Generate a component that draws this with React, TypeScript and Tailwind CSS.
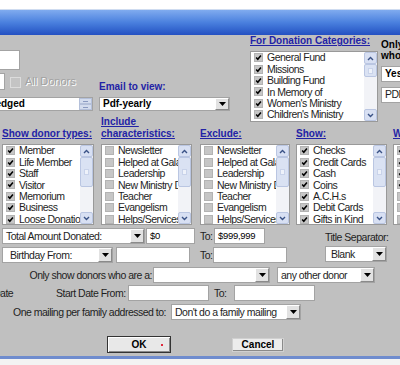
import React from 'react';

// donor report dialog, cropped

const txt = "text-[10.5px] tracking-[-0.5px] text-[#1e1e1e]";
const head = "text-[10px] font-bold leading-[12px] text-[#2323a6] underline whitespace-nowrap";

function Tick() {
  return (
    <svg width="7" height="7" viewBox="0 0 9 9">
      <path d="M1.5 4.6 3.6 6.9 7.6 2" fill="none" stroke="#000" strokeWidth="2" />
    </svg>
  );
}

function Box({ on }: { on: boolean }) {
  return (
    <span className="flex h-[9px] w-[9px] shrink-0 items-center justify-center border border-[#b3b3b3] bg-[#c6c6c6]">
      {on && <Tick />}
    </span>
  );
}

function Arrow({ up }: { up?: boolean }) {
  return (
    <div className="flex h-[12px] shrink-0 items-center justify-center rounded-[2px] border border-[#bac6e2] bg-[#d8e0f3]">
      <svg width="7" height="5" viewBox="0 0 7 5">
        <path d={up ? 'M1 4 3.5 1.5 6 4' : 'M1 1 3.5 3.5 6 1'} fill="none" stroke="#3a5286" strokeWidth="1.4" />
      </svg>
    </div>
  );
}

function ScrollBar({ thumb }: { thumb: string }) {
  return (
    <div className="flex w-[13px] shrink-0 flex-col bg-[#f2f3f7]">
      <Arrow up />
      <div className="flex-1">
        <div className={`flex items-center justify-center rounded-[2px] border border-[#bac6e2] bg-[#dae2f3] ${thumb}`}>
          <span className="h-[6px] w-[5px] border border-[#c9d3ea] bg-[#eef2fa]" />
        </div>
      </div>
      <Arrow />
    </div>
  );
}

function ListBox({ items, on, className, thumb }: { items: string[]; on: number; className: string; thumb: string }) {
  return (
    <div className={`flex border border-[#999] bg-white ${className}`}>
      <div className="flex min-w-0 flex-1 flex-col overflow-hidden">
        {items.map((t, i) => (
          <div key={t} className="flex h-[11.4px] shrink-0 items-center pl-[3px]">
            <Box on={i < on} />
            <span className={`ml-[4px] whitespace-nowrap leading-none ${txt}`}>{t}</span>
          </div>
        ))}
      </div>
      <ScrollBar thumb={thumb} />
    </div>
  );
}

function DropBtn() {
  return (
    <div className="flex w-[14px] shrink-0 items-center justify-center border border-b-[#8a8a8a] border-l-white border-r-[#8a8a8a] border-t-white bg-[#e2e2e2]">
      <svg width="7" height="4" viewBox="0 0 7 4">
        <path d="M0 0h7L3.5 4z" fill="#000" />
      </svg>
    </div>
  );
}

function Select({ text, className, bold, pad = 'pl-[3px]' }: { text: string; className: string; bold?: boolean; pad?: string }) {
  return (
    <div className={`flex border border-[#a3a3a3] bg-white ${className}`}>
      <span
        className={`min-w-0 flex-1 self-center overflow-hidden whitespace-nowrap leading-[12px] ${pad} ${
          bold ? 'text-[10px] font-bold text-black' : txt
        }`}
      >
        {text}
      </span>
      <DropBtn />
    </div>
  );
}

function Field({ text = '', className }: { text?: string; className: string }) {
  return (
    <div className={`flex items-center overflow-hidden whitespace-nowrap border border-[#a3a3a3] bg-white pl-[3px] ${className}`}>
      {text}
    </div>
  );
}

const donorTypes = ['Member', 'Life Member', 'Staff', 'Visitor', 'Memorium', 'Business', 'Loose Donations'];
const traits = ['Newsletter', 'Helped at Gala', 'Leadership', 'New Ministry Dept', 'Teacher', 'Evangelism', 'Helps/Services'];
const payTypes = ['Checks', 'Credit Cards', 'Cash', 'Coins', 'A.C.H.s', 'Debit Cards', 'Gifts in Kind'];
const categories = ['General Fund', 'Missions', 'Building Fund', 'In Memory of', "Women's Ministry", "Children's Ministry"];
const withList = ['Pledges', 'Gifts', 'Notes', 'Memos', 'Other', 'Misc', 'Extra'];

export default function App() {
  return (
    <div className="h-[365px] w-[400px] overflow-hidden bg-white font-['Liberation_Sans',Arial,sans-serif]">
      <div className="h-[10px] border-b border-[#cfdcf0] bg-white" />
      <div className="h-[25px] bg-gradient-to-b from-[#80abef] via-[#4a80de] to-[#2450c2]" />

      <div className="h-[321px] bg-[#c0c0c0]">
        {/* top block */}
        <div className="flex h-[93px]">
          <div className="flex w-[250px] shrink-0 flex-col">
            <Field className="-ml-[10px] mt-[15px] h-[20px] w-[30px]" />
            <div className="mt-[3px] flex h-[20px] items-start">
              <div className="flex w-[99px] shrink-0 items-start">
                <Field className="-ml-[20px] h-[17px] w-[25px]" />
                <span className="ml-[5px] mt-[4px] h-[11px] w-[11px] border border-[#dcdcdc] bg-[#c4c4c4]" />
                <span className="ml-[4px] mt-[2px] text-[11px] leading-[13px] text-[#a2a2a2] [text-shadow:1px_1px_0_#fff]">All Donors</span>
              </div>
              <span className="mt-[8px] text-[10px] font-bold leading-[12px] text-[#2323a6]">Email to view:</span>
            </div>
            <div className="mt-[4px] flex h-[14px]">
              <div className="-ml-[18px] flex w-[111px] border border-[#a3a3a3] bg-white">
                <span className="flex-1 self-center pl-[3px] text-[10px] font-bold leading-[12px]">Pledged</span>
                <div className="flex w-[13px] flex-col">
                  <span className="flex flex-1 items-center justify-center border border-[#b4c0da] bg-[#d3dcee]">
                    <span className="h-px w-[5px] bg-[#8a9ac0]" />
                  </span>
                  <span className="flex flex-1 items-center justify-center border border-[#b4c0da] bg-[#d3dcee]">
                    <span className="h-px w-[5px] bg-[#8a9ac0]" />
                  </span>
                </div>
              </div>
              <Select text="Pdf-yearly" bold className="ml-[6px] w-[131px]" />
            </div>
            <span className={`ml-[101px] mt-[5px] ${head}`}>Include&nbsp;</span>
          </div>

          <div className="flex w-[128px] shrink-0 flex-col">
            <span className={head}>For Donation Categories:</span>
            <ListBox items={categories} on={6} className="mt-[4px] h-[71px]" thumb="h-[13px]" />
          </div>

          <div className="ml-[3px] flex w-[60px] shrink-0 flex-col">
            <span className="mt-[4px] text-[10px] font-bold leading-[11px] text-black">Only</span>
            <span className="text-[10px] font-bold leading-[11px] text-black">whose</span>
            <Select text="Yes" bold className="mt-[5px] h-[16px] w-[60px]" />
            <Field text="PDF" className={`mt-[5px] h-[16px] w-[60px] ${txt}`} />
          </div>
        </div>

        {/* lists */}
        <div className="flex">
          <div className="ml-[2px] flex w-[92px] shrink-0 flex-col">
            <span className={head}>Show donor types:</span>
            <ListBox items={donorTypes} on={7} className="mt-[4px] h-[81px]" thumb="h-[30px]" />
          </div>
          <div className="ml-[7px] flex w-[91px] shrink-0 flex-col">
            <span className={head}>characteristics:</span>
            <ListBox items={traits} on={0} className="mt-[4px] h-[81px]" thumb="h-[30px]" />
          </div>
          <div className="ml-[8px] flex w-[90px] shrink-0 flex-col">
            <span className={head}>Exclude:</span>
            <ListBox items={traits} on={0} className="mt-[4px] h-[81px]" thumb="h-[30px]" />
          </div>
          <div className="ml-[6px] flex w-[91px] shrink-0 flex-col">
            <span className={head}>Show:</span>
            <ListBox items={payTypes} on={7} className="mt-[4px] h-[81px]" thumb="h-[30px]" />
          </div>
          <div className="ml-[6px] flex w-[90px] shrink-0 flex-col">
            <span className={head}>With:</span>
            <ListBox items={withList} on={4} className="mt-[4px] h-[81px]" thumb="h-[30px]" />
          </div>
        </div>

        {/* amount / birthday rows */}
        <div className="mt-[3px] flex">
          <div className="flex w-[290px] shrink-0 flex-col">
            <div className="flex h-[16px] items-stretch">
              <Select text="Total Amount Donated:" className="ml-[2px] w-[143px]" />
              <Field text="$0" className="ml-[1px] w-[49px] text-[9.5px] tracking-[-0.3px]" />
              <span className={`ml-[5px] w-[14px] self-center leading-[12px] ${txt}`}>To:</span>
              <Field text="$999,999" className="w-[51px] text-[9.5px] tracking-[-0.3px]" />
            </div>
            <div className="mt-[3px] flex h-[16px] items-stretch">
              <Select text="Birthday From:" pad="pl-[7px]" className="ml-[2px] w-[111px]" />
              <Field className="ml-[3px] w-[74px]" />
              <span className={`ml-[10px] w-[13px] self-center leading-[12px] ${txt}`}>To:</span>
              <Field className="w-[74px]" />
            </div>
          </div>
          <div className="ml-[35px] flex flex-col">
            <span className={`mt-[3px] leading-[12px] ${txt}`}>Title Separator:</span>
            <Select text="Blank" pad="pl-[5px]" className="mt-[3px] h-[16px] w-[62px]" />
          </div>
        </div>

        <div className="mt-[4px] flex h-[16px] items-stretch">
          <span className={`w-[153px] self-center pr-[1px] text-right leading-[12px] ${txt}`}>Only show donors who are a:</span>
          <Select text="" className="w-[117px]" />
          <Select text="any other donor" className="ml-[7px] w-[98px]" />
        </div>

        <div className="mt-[2px] flex h-[16px] items-stretch">
          <span className={`-ml-[7px] w-[63px] self-center leading-[12px] ${txt}`}>Date</span>
          <span className={`w-[72px] self-center leading-[12px] ${txt}`}>Start Date From:</span>
          <Field className="w-[81px]" />
          <span className={`ml-[5px] w-[20px] self-center leading-[12px] ${txt}`}>To:</span>
          <Field className="w-[81px]" />
        </div>

        <div className="mt-[3px] flex h-[16px] items-stretch">
          <span className={`w-[171px] self-center pl-[13px] leading-[12px] ${txt}`}>One mailing per family addressed to:</span>
          <Select text="Don't do a family mailing" className="w-[130px]" />
        </div>

        <div className="mt-[16px] flex items-center">
          <div className="relative ml-[107px] flex h-[17px] w-[64px] items-center justify-center border border-[#333] bg-[#e8e8e8] shadow-[inset_1px_1px_0_#fff,inset_-1px_-1px_0_#8a8a8a]">
            <span className="text-[10px] font-bold leading-none text-black">OK</span>
            <span className="absolute right-[7px] top-[7px] h-[2px] w-[2px] bg-[#e0283c]" />
          </div>
          <div className="ml-[61px] flex h-[14px] w-[52px] items-center justify-center border border-[#d0d0d0] bg-[#ececec] shadow-[inset_-1px_-1px_0_#8a8a8a]">
            <span className="text-[10px] font-bold leading-none text-black">Cancel</span>
          </div>
        </div>
      </div>

      <div className="h-[3px] bg-[#6f8cce]" />
      <div className="h-[6px] bg-[#f3f3f3]" />
    </div>
  );
}
